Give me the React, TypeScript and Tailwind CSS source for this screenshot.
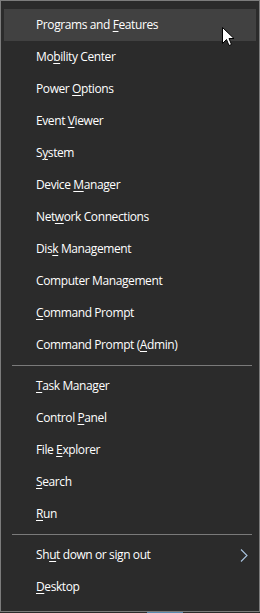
import React from "react"

type Item = { pre: string; key: string; post: string; arrow?: boolean; hover?: boolean }

const groups: Item[][] = [
  [
    { pre: "Programs and ", key: "F", post: "eatures", hover: true },
    { pre: "Mo", key: "b", post: "ility Center" },
    { pre: "Power ", key: "O", post: "ptions" },
    { pre: "Event ", key: "V", post: "iewer" },
    { pre: "S", key: "y", post: "stem" },
    { pre: "Device ", key: "M", post: "anager" },
    { pre: "Net", key: "w", post: "ork Connections" },
    { pre: "Dis", key: "k", post: " Management" },
    { pre: "Computer Mana", key: "g", post: "ement" },
    { pre: "", key: "C", post: "ommand Prompt" },
    { pre: "Command Prompt (", key: "A", post: "dmin)" },
  ],
  [
    { pre: "", key: "T", post: "ask Manager" },
    { pre: "Control ", key: "P", post: "anel" },
    { pre: "File ", key: "E", post: "xplorer" },
    { pre: "", key: "S", post: "earch" },
    { pre: "", key: "R", post: "un" },
  ],
  [
    { pre: "Sh", key: "u", post: "t down or sign out", arrow: true },
    { pre: "", key: "D", post: "esktop" },
  ],
]

function MenuItem({ item }: { item: Item }) {
  return (
    <div
      className={`relative flex h-8 items-center pl-8 ${item.hover ? "bg-[#414141]" : ""}`}
    >
      <span className="text-[12px] leading-none tracking-[-0.4px] text-white">
        {item.pre}
        <u className="underline decoration-1 underline-offset-2">{item.key}</u>
        {item.post}
      </span>
      {item.arrow && (
        <svg className="absolute right-[8px] top-[10px]" width="8" height="13" viewBox="0 0 8 13">
          <polyline points="1,0.5 7,6.5 1,12.5" fill="none" stroke="#a9c4e0" strokeWidth="1.1" />
        </svg>
      )}
    </div>
  )
}

export default function App() {
  return (
    <div className="w-[260px] h-[613px] bg-[#2b2b2b] font-['Open_Sans',sans-serif]">
      <div className="relative h-[612px] border border-[#7c7c7c] px-[3px] pt-2">
        {groups.map((g, gi) => (
          <div key={gi}>
            {gi > 0 && (
              <div className="py-[4px] pl-2 pr-[4px]">
                <div className="h-px bg-[#7a7a7a]" />
              </div>
            )}
            {g.map((it) => (
              <MenuItem key={it.pre + it.key} item={it} />
            ))}
          </div>
        ))}
        <svg
          className="absolute left-[221px] top-[26px]"
          width="13"
          height="20"
          viewBox="0 0 13 20"
        >
          <path
            d="M0.5 0.5 L0.5 16.5 L4.5 12.5 L7 18.5 L9.5 17.5 L7 11.5 L12 11.5 Z"
            fill="#fff"
            stroke="#000"
            strokeWidth="1"
          />
        </svg>
      </div>
      <div className="flex h-px">
        <div className="w-[147px]" />
        <div className="w-[36px] bg-[#5a88ad]" />
      </div>
    </div>
  )
}
